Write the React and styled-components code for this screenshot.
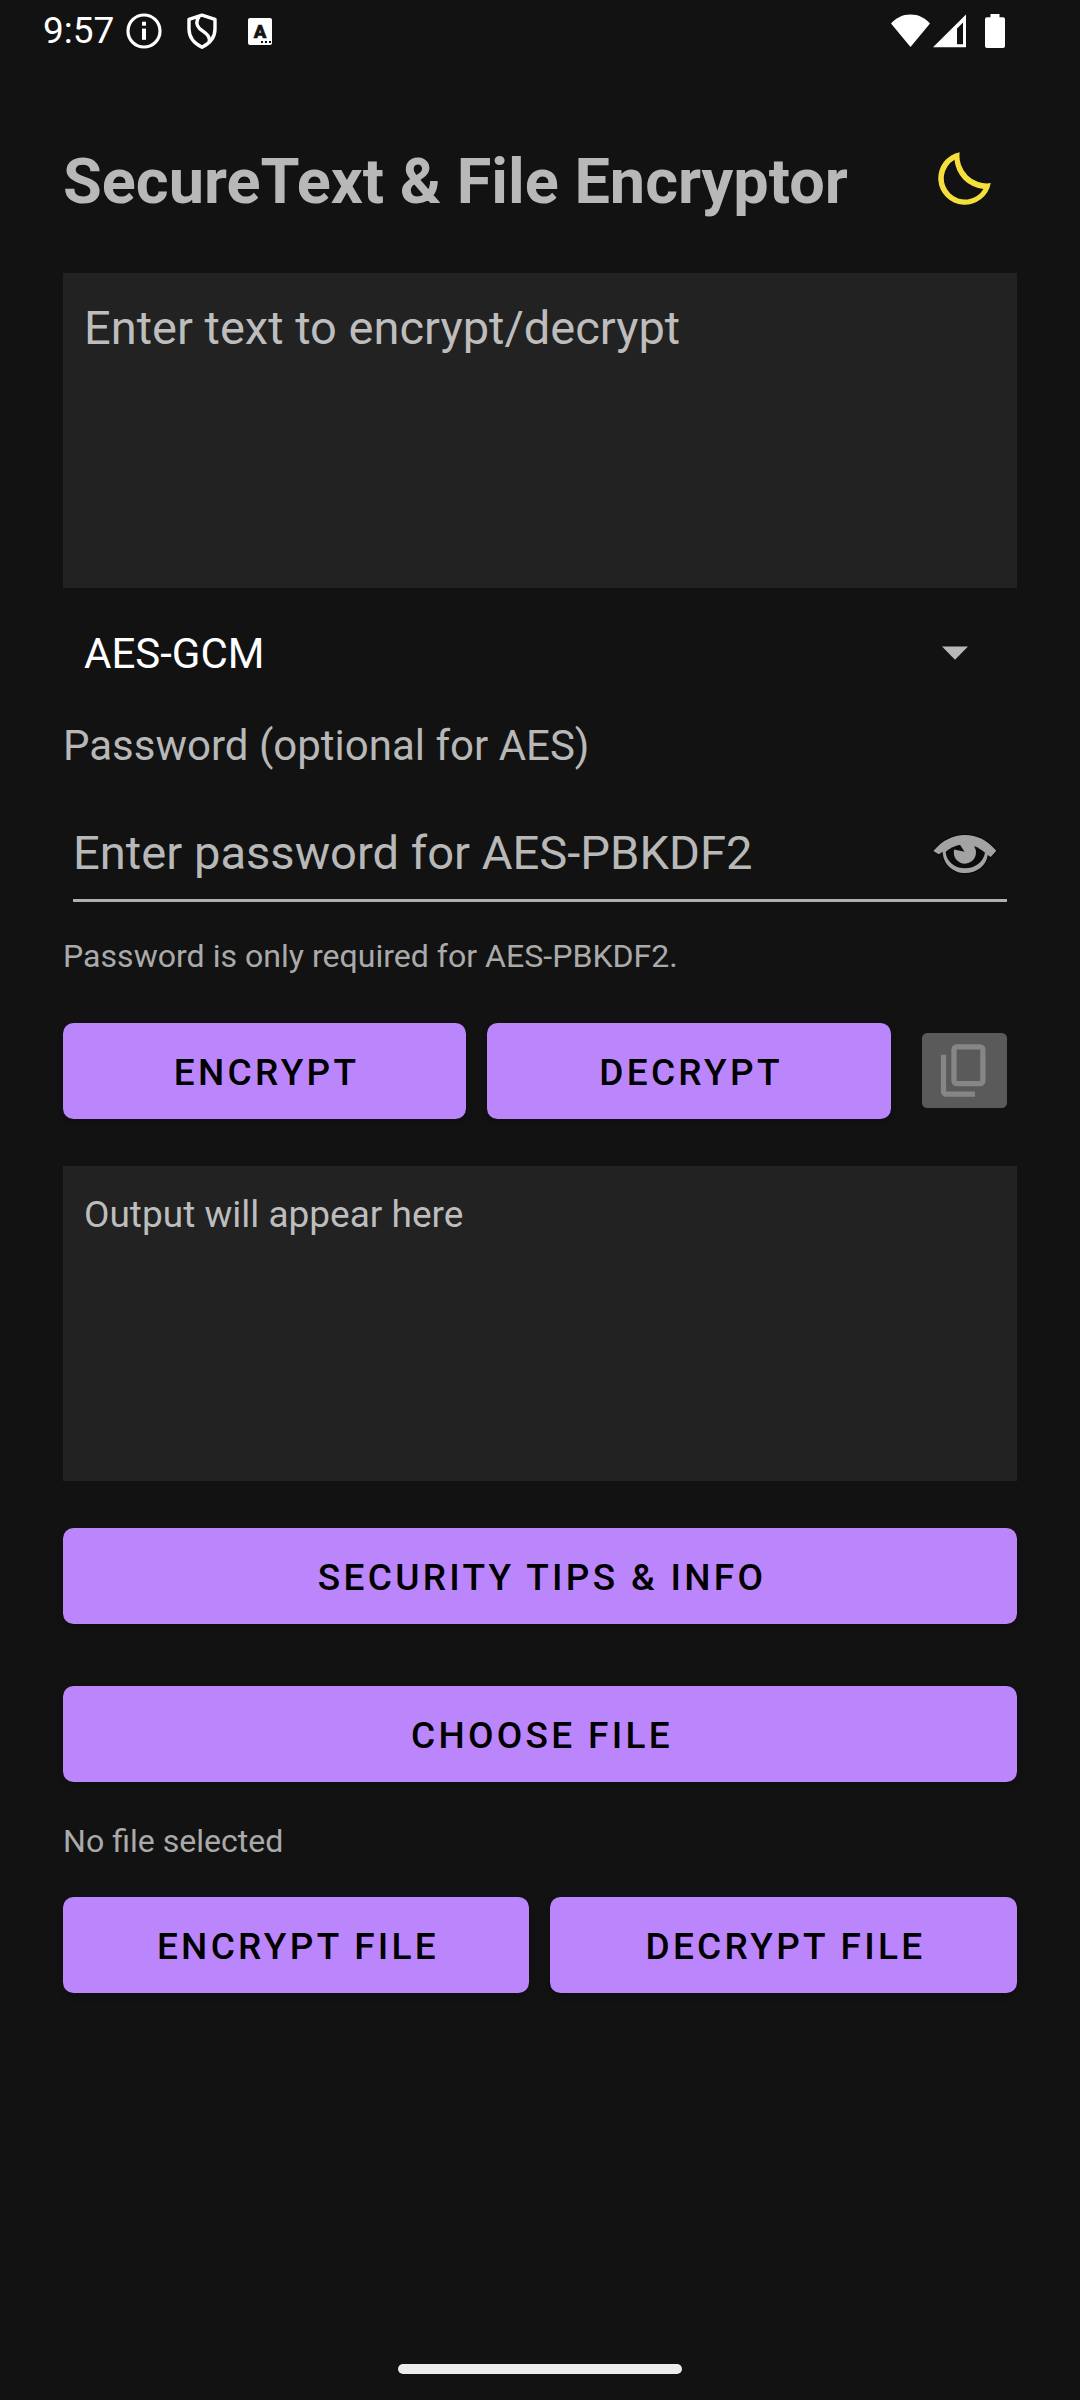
import React from "react";
import styled, { createGlobalStyle } from "styled-components";

const GlobalStyle = createGlobalStyle`
  * { box-sizing: border-box; }
  body {
    margin: 0;
    background: #121212;
    font-family: Roboto, "Noto Sans", sans-serif;
  }
  svg { display: block; flex: none; }
`;

const Screen = styled.div`
  width: 1080px;
  height: 2400px;
  background: #121212;
  display: flex;
  flex-direction: column;
  overflow: hidden;
`;

const StatusBar = styled.header`
  height: 62px;
  padding: 0 75px 0 43px;
  display: flex;
  justify-content: space-between;
  align-items: center;
`;

const StatusGroup = styled.div`
  display: flex;
  align-items: center;
  gap: ${(p) => p.$gap}px;
`;

const Clock = styled.span`
  width: 71px;
  font-size: 37px;
  line-height: 44px;
  color: #fff;
`;

const Content = styled.main`
  flex: 1;
  padding: 64px 63px 0;
  display: flex;
  flex-direction: column;
`;

const TitleRow = styled.div`
  height: 105px;
  padding: 0 21px 1px 0;
  display: flex;
  align-items: center;
  justify-content: space-between;
`;

const Title = styled.h1`
  margin: 8px 0 0;
  font-size: 63px;
  line-height: 74px;
  font-weight: 700;
  color: #b8b8b8;
  white-space: nowrap;
`;

const TextBox = styled.div`
  height: 315px;
  margin-top: ${(p) => p.$mt}px;
  padding: ${(p) => p.$pt}px 21px 21px;
  background: #222222;
  color: #bdbdbd;
  font-size: ${(p) => p.$size}px;
  line-height: ${(p) => p.$line}px;
`;

const Select = styled.div`
  height: 88px;
  margin-top: 21px;
  padding: 0 48px 0 21px;
  display: flex;
  align-items: center;
  justify-content: space-between;
  font-size: 42px;
  color: #fff;
`;

const Label = styled.label`
  margin-top: 24px;
  font-size: 42px;
  line-height: 50px;
  color: #b8b8b8;
`;

const PasswordField = styled.div`
  height: 95px;
  margin: 36px 10px 0;
  padding: 0 7px 1px 0;
  border-bottom: 3px solid #b0b0b0;
  display: flex;
  align-items: center;
  justify-content: space-between;
  font-size: 47.15px;
  line-height: 58px;
  color: #b8b8b8;
`;

const Caption = styled.p`
  margin: ${(p) => p.$mt}px 0 0;
  font-size: 32.1px;
  line-height: 38px;
  color: #aaaaaa;
`;

const Button = styled.button`
  flex: ${(p) => (p.$block ? "none" : "1 1 4px")};
  height: 96px;
  margin: ${(p) => p.$mt || 0}px 0 0;
  padding: 2px 0 0 4px;
  border: 0;
  border-radius: 10.5px;
  background: #bb86fc;
  box-shadow: 0 4px 7px rgba(0, 0, 0, 0.2);
  color: #000;
  font-family: inherit;
  font-size: 37px;
  font-weight: 500;
  letter-spacing: 3.3px;
`;

const ButtonRow = styled.div`
  margin-top: ${(p) => p.$mt}px;
  display: flex;
  align-items: flex-start;
  gap: 21px;

  & > ${Button} + ${Button} {
    flex-basis: 5px;
  }
`;

const CopyButton = styled.button`
  flex: none;
  width: 85px;
  height: 75px;
  margin: 10px 10px 0;
  padding: 0;
  border: 0;
  border-radius: 5.25px;
  background: #5a5a5b;
  display: flex;
  align-items: center;
  justify-content: center;
`;

const NavArea = styled.footer`
  height: 36px;
  display: flex;
  justify-content: center;
  align-items: flex-start;
`;

const NavPill = styled.div`
  width: 284px;
  height: 10px;
  border-radius: 5px;
  background: #ececec;
`;

const InfoIcon = () => (
  <svg width="36" height="36" viewBox="0 0 36 36">
    <circle cx="18" cy="18" r="16" fill="none" stroke="#fff" strokeWidth="3.2" />
    <rect x="16" y="8.7" width="4" height="4" fill="#fff" />
    <rect x="16" y="15.6" width="4" height="11.2" fill="#fff" />
  </svg>
);

const ShieldIcon = () => (
  <svg width="30" height="36" viewBox="0 0 30 36" fill="none" stroke="#fff" strokeWidth="3.4" strokeLinejoin="round">
    <path d="M15 2.2 28 6.4V16c0 8.4-5.2 14.4-13 18.2C7.2 30.4 2 24.4 2 16V6.4Z" />
    <path d="M12 3.5C9 8 9 12 12.5 15.5C17 19.5 23.5 21.5 22.3 29" />
  </svg>
);

const KeyboardIcon = () => (
  <svg width="24" height="27" viewBox="0 0 24 27">
    <rect width="24" height="27" rx="2" fill="#fff" />
    <text x="12" y="19.8" textAnchor="middle" fontFamily="Roboto, sans-serif" fontWeight="900" fontSize="18.5" fill="#121212" stroke="#121212" strokeWidth="0.6">A</text>
    <path d="M13 24h2M17 24h2M21 24h2" stroke="#121212" strokeWidth="2" />
  </svg>
);

const WifiIcon = () => (
  <svg width="39" height="34" viewBox="0 0 39 34">
    <path d="M19.5 33 0 9.4C5 3.8 11.5.4 19.5.4S34 3.8 39 9.4Z" fill="#fff" />
  </svg>
);

const SignalIcon = () => (
  <svg width="33" height="34" viewBox="0 0 33 34">
    <path fillRule="evenodd" d="M0 33.2 33 .4V33.2ZM24 30.2h6V8.5l-6 6Z" fill="#fff" />
  </svg>
);

const BatteryIcon = () => (
  <svg width="20" height="34" viewBox="0 0 20 34">
    <path d="M5.5 0h9v3.3H18a2 2 0 0 1 2 2V32a2 2 0 0 1-2 2H2a2 2 0 0 1-2-2V5.3a2 2 0 0 1 2-2h3.5Z" fill="#fff" />
  </svg>
);

const MoonIcon = () => (
  <svg width="66" height="66" viewBox="0 0 66 66">
    <path
      fillRule="evenodd"
      fill="#f5df3d"
      d="M29.7 7.2A26.5 26.5 0 1 0 60.8 38.1A27.5 27.5 0 0 1 29.7 7.2ZM24.5 14.8A21.3 21.3 0 1 0 53.5 44A32 32 0 0 1 24.5 14.8Z"
    />
  </svg>
);

const CaretIcon = () => (
  <svg width="28" height="14" viewBox="0 0 28 14">
    <path d="M1 .5H27L14 13.7Z" fill="#b8b8b8" />
  </svg>
);

const EyeIcon = () => (
  <svg width="70" height="48" viewBox="0 0 70 48">
    <path
      d="M3.3 22C13 11 23 6 35 6S57 11 66.3 21.7L60.7 28L57.7 26C56.5 36.5 47 44 35 44S13 35 12.7 22.7L8.7 25.3Z"
      fill="#a3a3a3"
      stroke="#0a0a0a"
      strokeWidth="2.5"
      paintOrder="stroke"
    />
    <path d="M15.7 22.7C20 19 25 16.5 30 15.7L44 17C48 18.5 52 21 55 23.7C53.5 33 45 39.3 35 39.3S16 32.5 15.7 22.7Z" fill="#0c0c0c" />
    <path d="M29 15.7 32 12H44.5V18A11.1 11.1 0 1 1 24.2 20.5L34.5 22.7L30 15.7Z" fill="#a3a3a3" />
  </svg>
);

const CopyIcon = () => (
  <svg width="63" height="63" viewBox="0 0 24 24">
    <path
      fill="#868686"
      d="M9 18q-.825 0-1.413-.588T7 16V4q0-.825.588-1.413T9 2h9q.825 0 1.413.588T20 4v12q0 .825-.588 1.413T18 18H9zm0-2h9V4H9v12zm-4 6q-.825 0-1.413-.588T3 20V6h2v14h11v2H5z"
    />
  </svg>
);

export default function App() {
  return (
    <Screen>
      <GlobalStyle />
      <StatusBar>
        <StatusGroup $gap={25}>
          <StatusGroup $gap={12}>
            <Clock>9:57</Clock>
            <InfoIcon />
          </StatusGroup>
          <StatusGroup $gap={31}>
            <ShieldIcon />
            <KeyboardIcon />
          </StatusGroup>
        </StatusGroup>
        <StatusGroup $gap={19}>
          <StatusGroup $gap={3}>
            <WifiIcon />
            <SignalIcon />
          </StatusGroup>
          <BatteryIcon />
        </StatusGroup>
      </StatusBar>
      <Content>
        <TitleRow>
          <Title>SecureText &amp; File Encryptor</Title>
          <MoonIcon />
        </TitleRow>
        <TextBox $mt={42} $pt={27} $size={47} $line={56}>Enter text to encrypt/decrypt</TextBox>
        <Select>
          <span>AES-GCM</span>
          <CaretIcon />
        </Select>
        <Label>Password (optional for AES)</Label>
        <PasswordField>
          <span>Enter password for AES-PBKDF2</span>
          <EyeIcon />
        </PasswordField>
        <Caption $mt={35}>Password is only required for AES-PBKDF2.</Caption>
        <ButtonRow $mt={48}>
          <Button>ENCRYPT</Button>
          <Button>DECRYPT</Button>
          <CopyButton aria-label="Copy output">
            <CopyIcon />
          </CopyButton>
        </ButtonRow>
        <TextBox $mt={47} $pt={27} $size={37} $line={44}>Output will appear here</TextBox>
        <Button $block $mt={47}>SECURITY TIPS &amp; INFO</Button>
        <Button $block $mt={62}>CHOOSE FILE</Button>
        <Caption $mt={40}>No file selected</Caption>
        <ButtonRow $mt={37}>
          <Button>ENCRYPT FILE</Button>
          <Button>DECRYPT FILE</Button>
        </ButtonRow>
      </Content>
      <NavArea>
        <NavPill />
      </NavArea>
    </Screen>
  );
}
